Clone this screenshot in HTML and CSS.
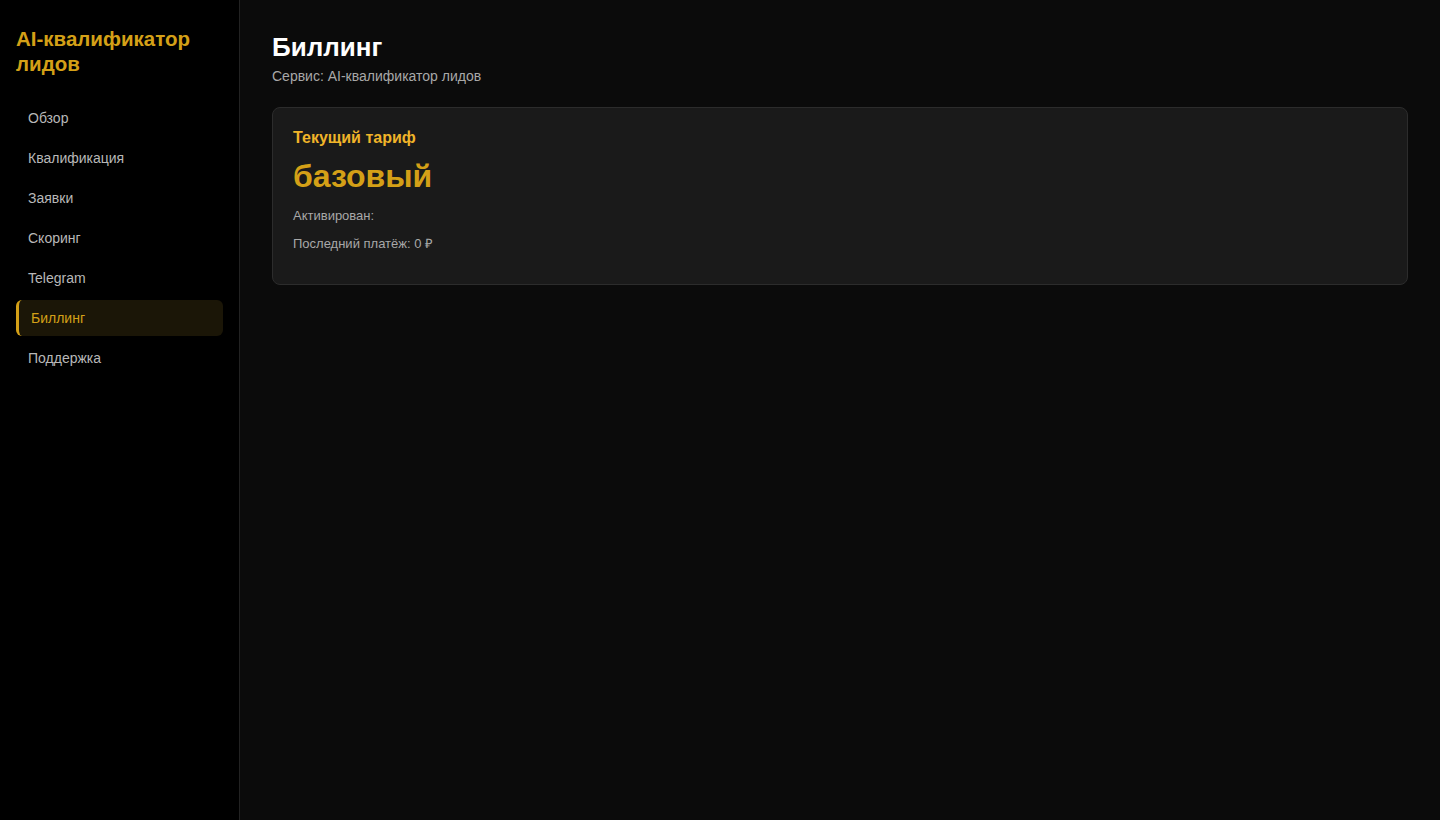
FILE: index.html
```html
<!DOCTYPE html>
<html lang="ru">
  <head>
    <meta charset="UTF-8" />
    <meta name="viewport" content="width=device-width, initial-scale=1.0" />
    <title>Биллинг</title>
    <link rel="stylesheet" href="styles.css">
  </head>
  <body>
    <div class="layout">
      <aside class="sidebar">
        <div class="brand">AI-квалификатор лидов</div>
        <nav class="nav">
          <a class="nav-item" href="#">Обзор</a>
          <a class="nav-item" href="#">Квалификация</a>
          <a class="nav-item" href="#">Заявки</a>
          <a class="nav-item" href="#">Скоринг</a>
          <a class="nav-item" href="#">Telegram</a>
          <a class="nav-item active" href="#">Биллинг</a>
          <a class="nav-item" href="#">Поддержка</a>
        </nav>
      </aside>

      <main class="content">
        <h1 class="page-title">Биллинг</h1>
        <div class="page-sub">Сервис: AI-квалификатор лидов</div>

        <section class="card">
          <h3 class="card-title">Текущий тариф</h3>
          <div class="plan">базовый</div>
          <p class="meta">Активирован: </p>
          <p class="meta">Последний платёж: 0 ₽</p>
        </section>
      </main>
    </div>
  </body>
</html>
```

FILE: styles.css
```css
* {
  box-sizing: border-box;
}
body {
  margin: 0;
  background: #0b0b0b;
  color: #e6e6e6;
  font-family: 'Liberation Sans', Arial, sans-serif;
}
.layout {
  display: flex;
  min-height: 100vh;
}
.sidebar {
  width: 240px;
  flex-shrink: 0;
  background: #000000;
  border-right: 1px solid #222;
  padding: 26px 16px;
}
.brand {
  color: #d4a017;
  font-size: 20.5px;
  font-weight: bold;
  line-height: 25px;
  margin-bottom: 24px;
}
.nav {
  display: flex;
  flex-direction: column;
  gap: 4px;
}
.nav-item {
  display: flex;
  align-items: center;
  height: 36px;
  padding: 0 12px;
  border-radius: 6px;
  color: #b8b8b8;
  font-size: 14px;
  text-decoration: none;
}
.nav-item.active {
  background: #1b1607;
  color: #d4a017;
  border-left: 3px solid #d4a017;
}
.content {
  flex: 1;
  padding: 32px;
}
.page-title {
  margin: 0;
  font-size: 26px;
  color: #ffffff;
}
.page-sub {
  margin-top: 5px;
  font-size: 14px;
  color: #a8a8a8;
}
.card {
  margin-top: 23px;
  background: #1a1a1a;
  border: 1px solid #2c2c2c;
  border-radius: 8px;
  padding: 20px;
}
.card-title {
  margin: 0;
  font-size: 16px;
  line-height: 19px;
  color: #f0b429;
}
.plan {
  margin-top: 11px;
  font-size: 32px;
  font-weight: bold;
  line-height: 37px;
  color: #d4a017;
}
.meta {
  margin: 13px 0;
  font-size: 13px;
  line-height: 15px;
  color: #a8a8a8;
}
```
